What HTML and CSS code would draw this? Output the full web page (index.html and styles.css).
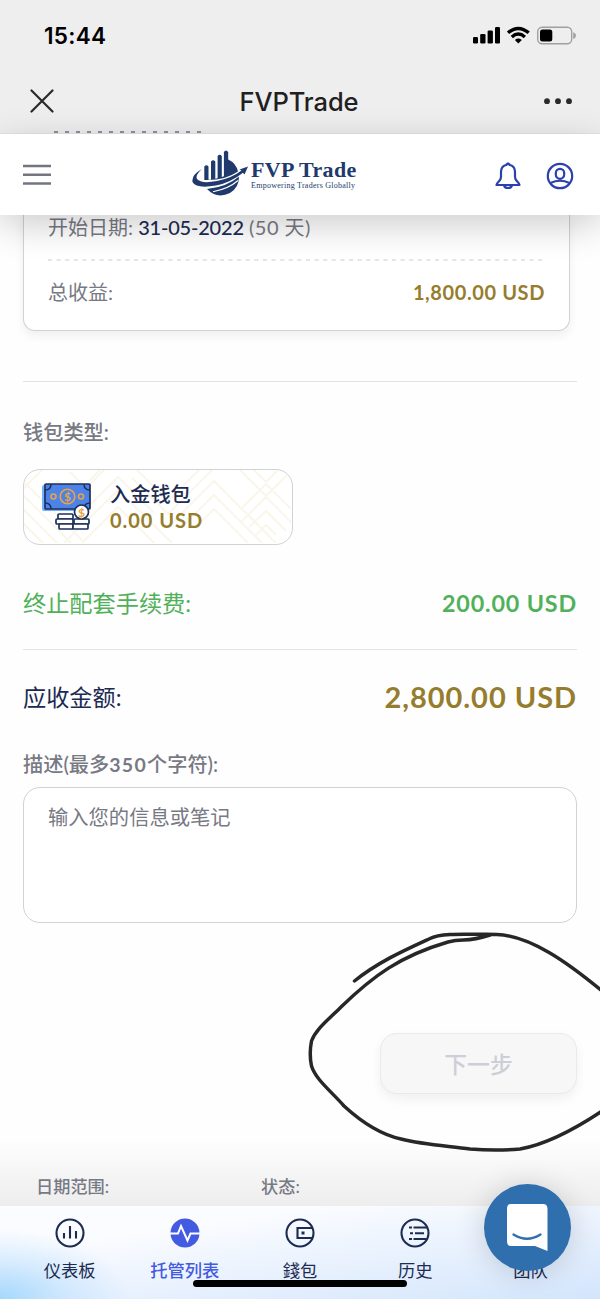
FILE: index.html
```html
<!DOCTYPE html>
<html lang="zh-CN">
<head>
<meta charset="utf-8">
<title>FVPTrade</title>
<link rel="stylesheet" href="styles.css">
</head>
<body>
<div class="screen">
  <div class="chrome">
    <div class="status">
      <span class="clock">15:44</span>
      <svg class="status-icons" width="104" height="20" viewBox="0 0 104 20">
        <rect x="1" y="11" width="5" height="6.500" rx="1.300"/><rect x="8.200" y="8" width="5.300" height="9.500" rx="1.300"/><rect x="15.600" y="4.500" width="5.300" height="13" rx="1.300"/><rect x="23" y="1" width="5" height="16.500" rx="1.300"/>
        <g fill="none" stroke="#000" stroke-width="3.400"><path d="M36 6.800Q46.300-2 56.700 6.800"/><path d="M39.800 11Q46.300 5.200 52.900 11"/></g>
        <path d="M46.300 17.600L42.900 14Q46.300 11.200 49.800 14Z"/>
        <rect x="65.700" y="1.200" width="34" height="16.600" rx="4.500" fill="none" stroke="#a0a0a0" stroke-width="1.400"/><rect x="68" y="3.500" width="12.300" height="12" rx="2.500"/><path d="M101.200 6.200Q104 7 104 9.500T101.200 13Z" fill="#a0a0a0"/>
      </svg>
    </div>
    <div class="titlebar">
      <svg width="26" height="26" viewBox="0 0 26 26"><path d="M2.500 1.500L23.500 22.500M23.500 1.500L2.500 22.500" stroke="#2a2a2a" stroke-width="2.200" stroke-linecap="round"/></svg>
      <span class="title">FVPTrade</span>
      <svg width="30" height="8" viewBox="0 0 30 8" fill="#2a2a2a"><circle cx="4" cy="3.200" r="2.900"/><circle cx="15" cy="3.200" r="2.900"/><circle cx="26" cy="3.200" r="2.900"/></svg>
    </div>
    <div class="peek"></div>
  </div>

  <header class="header">
    <svg class="menu" width="28" height="22" viewBox="0 0 28 22" stroke="#737681" stroke-width="2.600"><path d="M0 2H28M0 10.700H28M0 19.500H28"/></svg>
    <div class="logo">
      <svg width="56" height="48" viewBox="0 0 56 48">
        <g fill="#203a6d">
          <path d="M12.300 30V16.500q2-2.600 4.200 0V29.800l2.500-.4V11.500q2-2.600 4.300 0V28.800l2.300-.5V6q2-2.600 4.200 0V27l2.100-.7V2q2-3 4.300 0V9.500Q44 13 46 21.500Q32 31 12.300 30Z"/>
          <path d="M10 19Q3 25 5 29Q9 34 25 31Q40 28 49.500 20.500L47.500 19.500L56 16.500L52.500 24.500L51 22.800Q38 33 24 35.500Q4 39 .5 32Q-.8 25 10 19Z"/>
          <path d="M15 39Q35 37 47 26.500Q47 37.500 38 43Q25 49.500 15 39Z"/>
        </g>
        <path d="M21 41.800Q37 38.500 46 30.500" fill="none" stroke="#fff" stroke-width="1.100"/>
      </svg>
      <div class="brand"><span class="brand-name">FVP Trade</span><span class="brand-tag">Empowering Traders Globally</span></div>
    </div>
    <div class="actions">
      <svg width="26" height="28" viewBox="0 0 26 28" fill="none" stroke="#2b41ae" stroke-width="2.200" stroke-linejoin="round"><path d="M13 1.500L11 3C7.500 4 6 7 6 10V15C6 19 2.500 19.500 1.500 23H24.500C23.500 19.500 20 19 20 15V10C20 7 18.500 4 15 3ZM9 23C9.500 27 16.500 27 17 23"/></svg>
      <svg width="28" height="28" viewBox="0 0 28 28" fill="none" stroke="#2b41ae" stroke-width="2.200"><circle cx="14" cy="14" r="12.200"/><rect x="9.800" y="6.800" width="8.400" height="10" rx="4.200"/><path d="M4.500 21Q14 16.500 23.500 21"/></svg>
    </div>
  </header>

  <main class="content">
    <section class="card">
      <div class="card-row date"><span>开始日期: <span class="navy start">31-05-2022</span> <span class="days">(50 天)</span></span></div>
      <svg class="dash" width="497" height="2"><path d="M0 1H497" stroke="#dedee2" stroke-width="1.300" stroke-dasharray="4 4.600"/></svg>
      <div class="card-row total"><span>总收益:</span><b class="gold profit">1,800.00 USD</b></div>
    </section>
    <div class="rule rule-one"></div>
    <div class="label wallet-label">钱包类型:</div>
    <section class="wallet">
      <svg class="pattern" width="267" height="73" viewBox="0 0 267 73" fill="none" stroke="#faf6eb" stroke-width="2"><path d="M-4 50L46 100M-4 36L60 100M-4 8L60 72M-4 22L74 100M-4 22L34-16M-4 8L20-16M20 25L34 11L62 39M62 39L94 7L130 43M40 73L94 20L148 73M58 73L94 37L130 73M66 10L94-18M46 2L62 18L94-14M108-5L144 31L190-15M108 8L144 44L204-16M144 57L190 11L252 73M158 57L190 25L238 73M172 57L190 39L224 73M214-2L242 26L270-2M214-16L242 12L270-16M218 38L242 14L270 42M218 51L242 27L270 55M225 57L242 41L262 61M232 65L242 55L252 65"/></svg>
      <svg class="money" width="50" height="48" viewBox="0 0 50 48">
        <rect x="0" y="2" width="46" height="26" rx="2" fill="#73b0ff"/><rect x="3" y="1" width="45" height="25" rx="1" fill="#4d83e8" stroke="#1e2f5b" stroke-width="1.700"/>
        <path d="M3 7Q9 7 9 1M42 1Q42 7 48 7M3 20Q9 20 9 26M42 26Q42 20 48 20" fill="none" stroke="#1e2f5b" stroke-width="1.500"/>
        <g fill="none" stroke="#e7a344" stroke-width="1.600"><circle cx="25.500" cy="13.500" r="7.300"/><circle cx="11.500" cy="13.500" r="2.500"/><circle cx="39" cy="13.500" r="2.500"/></g>
        <text x="25.500" y="18" class="coin">$</text>
        <g fill="#fff" stroke="#1e2f5b" stroke-width="1.700"><rect x="16" y="31" width="15" height="5" rx="1"/><rect x="14" y="36" width="17" height="5" rx="1"/><rect x="17" y="41" width="14" height="5" rx="1"/><rect x="32" y="36" width="15" height="5" rx="1"/><rect x="31" y="41" width="15" height="5" rx="1"/><circle cx="39.500" cy="29" r="7"/></g>
        <text x="39.500" y="33.500" class="coin">$</text>
      </svg>
      <div class="wallet-info"><b class="navy wallet-name">入金钱包</b><b class="gold wallet-sum">0.00 USD</b></div>
    </section>
    <div class="line fee"><span>终止配套手续费:</span><b class="fee-sum">200.00 USD</b></div>
    <div class="rule"></div>
    <div class="line receive"><span class="navy">应收金额:</span><b class="gold receive-sum">2,800.00 USD</b></div>
    <div class="label note-label">描述(最多<span class="limit">350</span>个字符):</div>
    <div class="note">输入您的信息或笔记</div>
    <div class="next-row"><div class="next">下一步</div></div>
    <div class="filters"><span>日期范围:</span><span>状态:</span></div>
  </main>

  <nav class="tabs">
    <div class="tab"><svg width="30" height="30" viewBox="0 0 30 30" fill="none" stroke="#1c2b52" stroke-width="2.100"><circle cx="15" cy="15" r="13.500"/><path d="M9 15V20.500M15 8V20.500M21 13V20.500"/></svg><span>仪表板</span></div>
    <div class="tab active"><svg width="30" height="30" viewBox="0 0 30 30"><circle cx="15" cy="15" r="14.500" fill="#435be0"/><path d="M0 15.500H8L11 8L17.500 22.500L20.500 15.500H30" fill="none" stroke="#fff" stroke-width="2"/></svg><span>托管列表</span></div>
    <div class="tab"><svg width="30" height="30" viewBox="0 0 30 30" fill="none" stroke="#1c2b52" stroke-width="2.100"><circle cx="15" cy="15" r="13.500"/><path d="M27.500 10H12.500V20H27.500"/><rect x="16.500" y="13.500" width="3" height="3" fill="#1c2b52" stroke="none"/></svg><span>錢包</span></div>
    <div class="tab"><svg width="30" height="30" viewBox="0 0 30 30" fill="none" stroke="#1c2b52" stroke-width="2.100"><circle cx="15" cy="15" r="13.500"/><path d="M9 9.500H12M13.500 9.500H27M10 15.200H13M15 15.200H24M9 21H12M13.500 21H26.500"/></svg><span>历史</span></div>
    <div class="tab"><i class="icon-gap"></i><span>团队</span></div>
    <div class="home"></div>
  </nav>

  <div class="chat"><svg width="43" height="48" viewBox="0 0 43 48"><path d="M5 0H37Q41.500 0 41.500 5V47L29 42H5Q1 42 1 37V5Q1 0 5 0Z" fill="#fff"/><path d="M7.500 30.500Q21 39 34.500 30.500" fill="none" stroke="#2f6fae" stroke-width="2.300" stroke-linecap="round"/></svg></div>
  <svg class="scribble" width="300" height="240" viewBox="300 920 300 240"><path d="M354.500 981C378 962 405 950 430 938.500C440 933 460 934 497 934.500C531 936 568 963 602 991M490 935C465 943 465 938 448 942C400 956 373 976 341 1007C328 1020 316 1029 311.500 1041Q309 1054 311.500 1066C316 1080 331 1091 344 1106C356 1117 378 1134 401 1139C425 1145 450 1146 470 1149Q496 1151 520 1149C548 1144 578 1127 602 1111" fill="none" stroke="#272727" stroke-width="3.500" stroke-linecap="round" stroke-linejoin="round"/></svg>
</div>
</body>
</html>
```
FILE: styles.css
```css
* { box-sizing: border-box; }
body { margin: 0; background: #fefefe; font-family: Lato, "Noto Sans CJK SC", sans-serif; color: #777983; }
svg { display: block; flex: none; }
.screen { position: relative; width: 600px; height: 1299px; overflow: hidden; display: flex; flex-direction: column; }
.chrome { height: 134px; flex: none; background: #eeeeef; border-bottom: 1px solid #e4e4e6; }
.status { height: 72px; padding: 0 24px 0 44px; display: flex; align-items: center; justify-content: space-between; color: #000; }
.clock { font: 600 22.500px/30px Inter, sans-serif; letter-spacing: .3px; }
.titlebar { height: 59px; padding: 0 27px 0 29px; display: flex; align-items: center; justify-content: space-between; color: #202020; }
.title { font: 500 25.500px/32px Inter, sans-serif; letter-spacing: -.1px; }
.peek { width: 151px; height: 2px; margin-left: 54px; background: repeating-linear-gradient(90deg, #8d909f 0 4px, transparent 4px 11px); }
.header { position: relative; z-index: 2; height: 81px; flex: none; padding: 0 27px 0 23px; display: flex; align-items: center; background: #fff; box-shadow: 0 10px 36px rgba(0,0,0,.2); }
.logo { display: flex; align-items: center; margin-left: 141px; gap: 3px; padding-bottom: 2px; color: #203a6d; }
.brand { display: flex; flex-direction: column; width: 106px; white-space: nowrap; }
.brand-name { font: bold 22px/23px "Liberation Serif", serif; letter-spacing: .35px; }
.brand-tag { font: 8px/9px "Liberation Serif", serif; letter-spacing: .26px; }
.actions { margin-left: auto; display: flex; gap: 25px; align-items: center; padding-top: 3px; margin-right: -1px; }
.content { flex: 1; min-height: 0; padding: 0 23px; background: linear-gradient(#fefefe 0 925px, #ededee 991px); display: flex; flex-direction: column; }
.card { width: 547px; height: 116px; flex: none; padding: 0 24px; border: 2px solid #d1d1d8; border-width: 0 1.500px 1.500px; border-radius: 0 0 12px 12px; background: #fff; box-shadow: 0 5px 10px rgba(0,0,0,.06); }
.card-row { display: flex; justify-content: space-between; align-items: center; font-size: 20px; white-space: nowrap; }
.date { height: 44px; padding-bottom: 22px; }
.start { letter-spacing: -.2px; font-weight: 500; }
.days { letter-spacing: .5px; }
.total { height: 61px; }
.navy { color: #1c2b52; }
.gold { color: #967d2d; }
b { font-weight: 700; white-space: nowrap; }
.profit { letter-spacing: .6px; }
.rule { height: 1px; flex: none; background: #e3e3e6; }
.rule-one { margin-top: 50px; }
.label { height: 30px; flex: none; font-size: 20.200px; line-height: 30px; font-weight: 500; color: #777983; }
.wallet-label { margin-top: 35px; }
.wallet { position: relative; width: 270px; height: 76px; flex: none; margin-top: 22px; padding-left: 18px; border: 1.500px solid #d1d1d8; border-radius: 17px; overflow: hidden; display: flex; align-items: center; gap: 18px; background: #fff; }
.pattern { position: absolute; left: 0; top: 0; }
.money, .wallet-info { position: relative; }
.coin { font: bold 12px Lato, sans-serif; fill: #e7a344; text-anchor: middle; }
.wallet-info { display: flex; flex-direction: column; }
.wallet-name { font-size: 20.200px; line-height: 26px; font-weight: 500; }
.wallet-sum { font-size: 20px; line-height: 26px; letter-spacing: .95px; }
.line { display: flex; justify-content: space-between; align-items: center; flex: none; font-size: 23.200px; }
.fee { height: 104px; padding-top: 10px; color: #51b15a; }
.fee-sum { font-size: 23.300px; letter-spacing: .85px; padding-top: 1px; }
.receive { height: 94px; padding-bottom: 2px; }
.receive-sum { font-size: 29px; letter-spacing: .95px; }
.note-label { margin-top: 5px; }
.limit { letter-spacing: 1.300px; font-weight: 700; font-size: 19.500px; line-height: 1; }
.note { height: 136px; flex: none; margin-top: 8px; padding: 14px 24px; border: 1.500px solid #d1d1d8; border-radius: 17px; background: #fff; font-size: 20.300px; line-height: 30px; }
.next-row { display: flex; justify-content: flex-end; margin-top: 110px; }
.next { width: 197px; height: 61px; border: 1.500px solid #e9e9ef; border-radius: 17px; background: #f7f7f7; box-shadow: 0 5px 12px rgba(0,0,0,.06); display: flex; align-items: center; justify-content: center; font-size: 22.800px; font-weight: 500; color: #cecdd8; padding-bottom: 1px; }
.filters { display: flex; margin: 80px 0 0 13px; font-size: 17.200px; line-height: 26px; font-weight: 500; color: #777983; }
.filters span:first-child { width: 225px; }
.tabs { position: relative; height: 93px; flex: none; padding: 12px 12px 0 12px; display: flex; background: radial-gradient(ellipse 130px 70px at 0 100%, #a5d8fd 0, rgba(180,220,253,.5) 50%, transparent 100%), linear-gradient(172deg, #fbfcff 0 25%, #d3e5fc 100%); }
.tab { flex: 1; display: flex; flex-direction: column; align-items: center; color: #1c2b52; font-size: 17.300px; line-height: 24px; gap: 11px; }
.tab.active { color: #435be0; font-weight: 500; }
.icon-gap { height: 30px; }
.home { position: absolute; left: 193px; top: 74px; width: 214px; height: 7px; border-radius: 4px; background: #000; }
.chat { position: absolute; z-index: 3; left: 484px; top: 1184px; width: 87px; height: 87px; border-radius: 50%; background: #2f6fae; box-shadow: 0 2px 30px rgba(0,0,0,.16); display: flex; align-items: center; justify-content: center; padding-top: 1px; }
.scribble { position: absolute; left: 300px; top: 920px; }
```
